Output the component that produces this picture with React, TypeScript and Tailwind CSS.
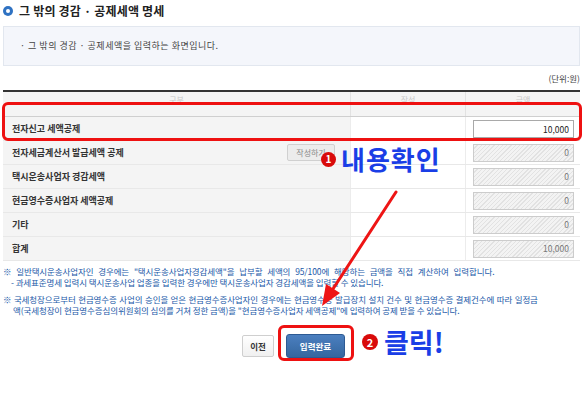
const hatch =
  'bg-[repeating-linear-gradient(135deg,#f3f3f3_0px,#f3f3f3_2px,#e2e2e2_2px,#e2e2e2_3px)]';

type Row = {
  label: string;
  value: string;
  editable?: boolean;
  button?: boolean;
};

const rows: Row[] = [
  { label: '전자신고 세액공제', value: '10,000', editable: true },
  { label: '전자세금계산서 발급세액 공제', value: '0', button: true },
  { label: '택시운송사업자 경감세액', value: '0' },
  { label: '현금영수증사업자 세액공제', value: '0' },
  { label: '기타', value: '0' },
  { label: '합계', value: '10,000' },
];

const App = () => {
  return (
    <div className="relative w-[585px] h-[393px] overflow-hidden bg-white font-['Noto_Sans_CJK_KR','Noto_Sans',sans-serif] text-[#333]">
      {/* 제목 */}
      <div className="flex h-[22px] items-center gap-[6px] pl-[3px]">
        <span className="flex h-[10px] w-[10px] items-center justify-center rounded-full bg-[#2f72c2]">
          <span className="h-[4px] w-[4px] rounded-full bg-white" />
        </span>
        <h1 className="text-[12px] font-bold tracking-[0.2px] text-[#222]">그 밖의 경감 · 공제세액 명세</h1>
      </div>

      {/* 안내 박스 */}
      <div className="mx-[3px] mt-[4px] flex h-[40px] w-[577px] items-center border border-[#e2e7ef] bg-[#f4f6fb] pl-[16px] text-[9px] tracking-[0.5px] text-[#444]">
        · 그 밖의 경감 · 공제세액을 입력하는 화면입니다.
      </div>

      <div className="flex h-[24px] w-[580px] items-center justify-end text-[8.5px] text-[#444]">(단위:원)</div>

      {/* 표 */}
      <div className="ml-[3px] w-[577px] border-t-2 border-[#333]">
        <div className="flex h-[25px] border-b border-[#cfcfcf] bg-[#f4f4f4] text-[8px] text-[#c8c8c8]">
          <div className="flex w-[347px] justify-center pt-[2px]">구분</div>
          <div className="flex w-[115px] justify-center border-l border-[#e2e2e2] pt-[2px]">작성</div>
          <div className="flex w-[115px] justify-center border-l border-[#e2e2e2] pt-[2px]">금액</div>
        </div>
        {rows.map((row) => (
          <div key={row.label} className="flex h-[24px] border-b border-[#e8e8e8]">
            <div className="flex w-[347px] items-center justify-between bg-[#f4f4f4] pl-[9px] pr-[15px]">
              <span className="text-[9px] font-bold text-[#333]">{row.label}</span>
              {row.button && (
                <button className="h-[17px] w-[48px] rounded-[2px] border border-[#d0d0d0] bg-[#ececec] text-[8px] text-[#888]">
                  작성하기
                </button>
              )}
            </div>
            <div className="w-[115px] border-l border-[#ececec] bg-white" />
            <div className="flex w-[115px] items-center border-l border-[#ececec] bg-white pl-[7px]">
              {row.editable ? (
                <input
                  readOnly
                  value={row.value}
                  className="h-[18px] w-[101px] border border-[#a9a9a9] bg-white px-[4px] text-right text-[8.5px] text-[#222] outline-none"
                />
              ) : (
                <div
                  className={`flex h-[18px] w-[101px] items-center justify-end border border-[#cccccc] ${hatch} px-[4px] text-[8.5px] text-[#777]`}
                >
                  {row.value}
                </div>
              )}
            </div>
          </div>
        ))}
      </div>

      {/* 안내 문구 */}
      <div className="pl-[3px] pt-[5px] text-[8.5px] leading-[11px] tracking-[-0.1px] whitespace-nowrap text-[#2158a8]">
        <p className="[word-spacing:3px]">※ 일반택시운송사업자인 경우에는 "택시운송사업자경감세액"을 납부할 세액의 95/100에 해당하는 금액을 직접 계산하여 입력합니다.</p>
        <p className="pl-[8px]">- 과세표준명세 입력시 택시운송사업 업종을 입력한 경우에만 택시운송사업자 경감세액을 입력할 수 있습니다.</p>
        <p className="mt-[6px] [word-spacing:0.7px]">※ 국세청장으로부터 현금영수증 사업의 승인을 얻은 현금영수증사업자인 경우에는 현금영수증 발급장치 설치 건수 및 현금영수증 결제건수에 따라 일정금</p>
        <p className="pl-[10px]">액(국세청장이 현금영수증심의위원회의 심의를 거쳐 정한 금액)을 "현금영수증사업자 세액공제"에 입력하여 공제 받을 수 있습니다.</p>
      </div>

      {/* 버튼 */}
      <div className="mt-[18px] flex items-center gap-[12px] pl-[242px]">
        <button className="h-[22px] w-[32px] rounded-[2px] border border-[#cfcfcf] bg-gradient-to-b from-white to-[#f0f0f0] text-[8.5px] font-bold text-[#333]">
          이전
        </button>
        <button className="h-[24px] w-[59px] rounded-[3px] border border-[#2d5a93] bg-gradient-to-b from-[#4b7fc0] to-[#35679f] text-[8.5px] font-bold text-white">
          입력완료
        </button>
      </div>

      {/* 주석 표시 */}
      <div className="pointer-events-none absolute left-[2px] top-[102px] h-[39px] w-[580px] rounded-[6px] border-[3px] border-[#ee1111]" />
      <div className="pointer-events-none absolute left-[278px] top-[325px] h-[36px] w-[76px] rounded-[6px] border-[3px] border-[#ee1111]" />

      <div className="absolute left-[321px] top-[145px] flex items-center gap-[5px]">
        <span className="flex h-[15px] w-[15px] items-center justify-center rounded-full bg-[#d90a0a] text-[10px] font-bold leading-none text-white">1</span>
        <span className="text-[26px] font-bold leading-[28px] tracking-[1px] text-[#1a3ee6]">내용확인</span>
      </div>
      <div className="absolute left-[362px] top-[326px] flex items-center gap-[6px]">
        <span className="flex h-[16px] w-[16px] items-center justify-center rounded-full bg-[#d90a0a] text-[11px] font-bold leading-none text-white">2</span>
        <span className="text-[27px] font-bold leading-[32px] text-[#1a3ee6]">클릭!</span>
      </div>

      <svg className="pointer-events-none absolute left-0 top-0" width="585" height="393" viewBox="0 0 585 393">
        <line x1="396" y1="192" x2="331" y2="292" stroke="#ee1515" strokeWidth="3" strokeLinecap="round" />
        <polygon points="322,306 326,284 340,293" fill="#ee1515" />
      </svg>
    </div>
  );
};

export default App;
